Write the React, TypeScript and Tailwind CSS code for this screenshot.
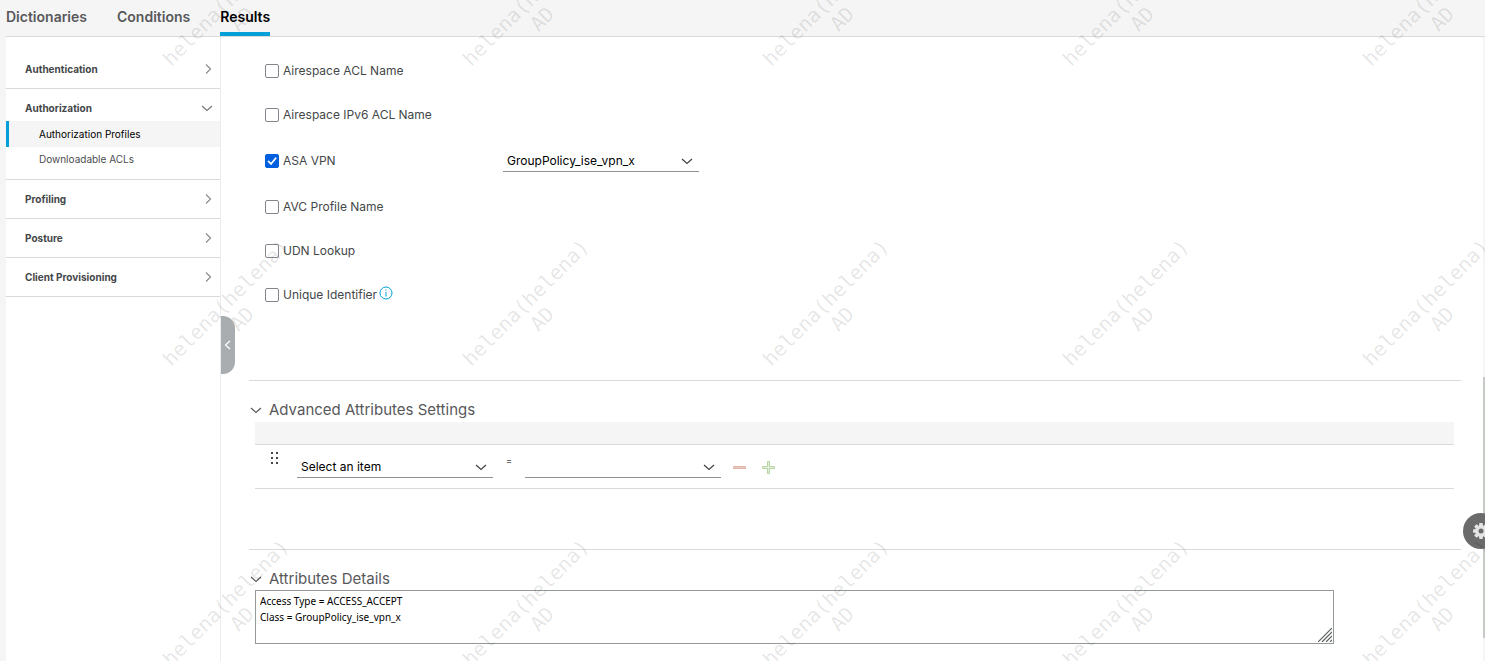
import { useState } from "react";
import type { ReactNode } from "react";

const BORDER = "border-[#d9dbd9]";

function Chevron({ dir, className = "" }: { dir: "down" | "right" | "left"; className?: string }) {
  const paths = { down: "M1 4 L6 8.5 L11 4", right: "M4 1.5 L8.5 6 L4 10.5", left: "M8 2 L3.5 6 L8 10" };
  return (
    <svg viewBox="0 0 12 12" className={`size-3 shrink-0 ${className}`} fill="none" stroke="currentColor" strokeWidth="1.2" aria-hidden="true">
      <path d={paths[dir]} />
    </svg>
  );
}

function NavItem({ children }: { children: ReactNode }) {
  return (
    <button className={`flex h-[39px] w-full items-center justify-between border-b pr-1.5 pl-[19px] text-left ${BORDER}`}>
      <span className="pt-px text-[10px] font-bold text-[#444749]">{children}</span>
      <Chevron dir="right" className="text-[#8a8d8f]" />
    </button>
  );
}

function Sidebar() {
  return (
    <nav className="w-[215px] shrink-0 border-r border-[#ececec] bg-white pt-[13px]">
      <NavItem>Authentication</NavItem>
      <div className={`border-b pb-[7px] ${BORDER}`}>
        <button className="flex h-8 w-full items-center justify-between pt-1.5 pr-[7px] pl-[19px]">
          <span className="pt-px text-[10px] font-bold text-[#444749]">Authorization</span>
          <Chevron dir="down" className="text-[#777a7c]" />
        </button>
        <a href="#profiles" className="flex h-[26px] items-center border-l-3 border-[#049fd9] bg-[#f5f5f5] pl-[30px] text-[10px] text-black">
          Authorization Profiles
        </a>
        <a href="#acls" className="flex h-[25px] items-center pl-[33px] text-[10px] text-[#4b4d4f]">
          Downloadable ACLs
        </a>
      </div>
      <NavItem>Profiling</NavItem>
      <NavItem>Posture</NavItem>
      <NavItem>Client Provisioning</NavItem>
    </nav>
  );
}

function Check({ label, checked = false }: { label: string; checked?: boolean }) {
  const [on, setOn] = useState(checked);
  return (
    <label className="flex items-center gap-1 text-[12px] text-[#444749]">
      <span className="grid size-[14px] place-items-center">
        <input
          type="checkbox"
          checked={on}
          onChange={() => setOn(!on)}
          className="col-start-1 row-start-1 size-[14px] appearance-none rounded-xs border border-[#85858e] bg-white checked:border-[#0060df] checked:bg-[#0060df]"
        />
        {on && (
          <svg viewBox="0 0 14 14" className="pointer-events-none col-start-1 row-start-1 size-[14px]" fill="none" stroke="white" strokeWidth="1.8" strokeLinecap="round" strokeLinejoin="round">
            <path d="M3.5 7.4 L6 10 L10.7 4.3" />
          </svg>
        )}
      </span>
      {label}
    </label>
  );
}

function Dropdown({ label, value }: { label: string; value: string }) {
  return (
    <div className="grid w-[196px] items-center border-b border-[#8f9490]">
      <select aria-label={label} className="col-start-1 row-start-1 h-5 w-full appearance-none bg-transparent px-1 text-[12px] text-black">
        <option>{value}</option>
      </select>
      <Chevron dir="down" className="pointer-events-none col-start-1 row-start-1 mr-1.5 justify-self-end text-[#3f4143]" />
    </div>
  );
}

function SectionTitle({ children }: { children: ReactNode }) {
  return (
    <h2>
      <button type="button" className="flex h-6 items-center gap-[7px] pl-px text-[15px] text-[#58585b]">
        <Chevron dir="down" />
        {children}
      </button>
    </h2>
  );
}

function Watermark() {
  return (
    <div aria-hidden="true" className="pointer-events-none absolute inset-0 overflow-hidden">
      <div className="-mt-[139px] ml-[84px] grid grid-cols-[repeat(5,300px)]">
        {Array.from({ length: 15 }, (_, i) => (
          <div key={i} className="grid h-[300px] place-items-center">
            <div className="-rotate-45 text-center font-['DejaVu_Sans_Mono',monospace] text-[20px] leading-[23px] text-black/11">
              helena(helena)
              <br />
              AD
            </div>
          </div>
        ))}
      </div>
    </div>
  );
}

export default function App() {
  return (
    <div className="relative flex h-screen flex-col overflow-hidden bg-[#f5f5f5] font-['Inter',sans-serif]">
      <header className="ml-1.5 flex h-[37px] shrink-0 gap-[30px] border-b border-[#d9dbd9] text-[14px] font-semibold text-[#58585b]">
        <a href="#dictionaries" className="flex h-9 items-center pb-1">Dictionaries</a>
        <a href="#conditions" className="flex h-9 items-center pb-1">Conditions</a>
        <a href="#results" className="flex h-9 items-center border-b-4 border-[#049fd9] text-black">Results</a>
      </header>

      <div className="flex min-h-0 flex-1 pl-1.5">
        <Sidebar />
        <button aria-label="Collapse menu" className="z-10 mt-[279px] flex h-[58px] w-[14px] shrink-0 items-center justify-center self-start rounded-r-xl bg-[#aaadb0] text-white">
          <Chevron dir="left" />
        </button>
        <main className="-ml-[14px] min-w-0 flex-1 bg-white pt-3 pr-[22px] pl-7">
          <form>
            <div className="pl-4">
              <div className="flex h-11 items-center"><Check label="Airespace ACL Name" /></div>
              <div className="flex h-11 items-center"><Check label="Airespace IPv6 ACL Name" /></div>
              <div className="flex h-12 items-center">
                <div className="w-[238px]"><Check label="ASA VPN" checked /></div>
                <Dropdown label="ASA VPN group policy" value="GroupPolicy_ise_vpn_x" />
              </div>
              <div className="flex h-11 items-center"><Check label="AVC Profile Name" /></div>
              <div className="flex h-11 items-center"><Check label="UDN Lookup" /></div>
              <div className="flex h-11 items-center gap-0.5">
                <Check label="Unique Identifier" />
                <svg viewBox="0 0 14 14" className="mb-1 size-[14px]" fill="none" stroke="#049fd9">
                  <circle cx="7" cy="7" r="6" />
                  <path d="M7 6 V10.5 M7 3.5 V4.7" />
                </svg>
              </div>
            </div>

            <section className={`mt-[63px] border-t pt-[17px] ${BORDER}`}>
              <SectionTitle>Advanced Attributes Settings</SectionTitle>
              <div className="mr-[7px] ml-1.5">
                <div className={`h-[23px] border-b bg-[#f5f5f5] ${BORDER}`} />
                <div className={`flex h-11 border-b pl-4 ${BORDER}`}>
                  <svg viewBox="0 0 8 14" className="mt-[7px] h-[14px] w-2" fill="#444749">
                    <path d="M0 0h2v2H0zM5 0h2v2H5zM0 5h2v2H0zM5 5h2v2H5zM0 10h2v2H0zM5 10h2v2H5z" />
                  </svg>
                  <div className="mt-3 ml-[18px]"><Dropdown label="Attribute" value="Select an item" /></div>
                  <span className="mt-2 w-8 text-center text-[9px] leading-4 text-[#444749]">=</span>
                  <div className="mt-3"><Dropdown label="Attribute value" value="" /></div>
                  <button type="button" aria-label="Remove" className="mt-4 ml-3 h-[14px]">
                    <svg viewBox="0 0 14 14" className="size-[14px]"><path d="M.5 5.5h12v2H.5z" fill="#ecc9bd" stroke="#dfb5a7" /></svg>
                  </button>
                  <button type="button" aria-label="Add" className="mt-4 ml-[15px] h-[14px]">
                    <svg viewBox="0 0 14 14" className="size-[14px]"><path d="M5.5 .5h2v5h5v2h-5v5h-2v-5h-5v-2h5z" fill="#e2f0d8" stroke="#b5d3a4" /></svg>
                  </button>
                </div>
              </div>
            </section>

            <section className={`mt-[60px] border-t pt-[17px] ${BORDER}`}>
              <SectionTitle>Attributes Details</SectionTitle>
              <div className="-mt-px ml-1.5 grid w-[89%]">
                <textarea
                  aria-label="Attributes Details"
                  readOnly
                  className="col-start-1 row-start-1 h-[54px] w-full resize-none border border-[#939995] px-1 py-0.5 font-['Noto_Sans',sans-serif] text-[10px] leading-4 text-black"
                  defaultValue={"Access Type = ACCESS_ACCEPT\nClass = GroupPolicy_ise_vpn_x"}
                />
                <svg viewBox="0 0 14 14" className="pointer-events-none col-start-1 row-start-1 mr-0.5 mb-0.5 size-[14px] self-end justify-self-end" stroke="#5c605d" strokeWidth="1.2">
                  <path d="M0 14L14 0M4 14L14 4M8 14L14 8M12 14L14 12" />
                </svg>
              </div>
            </section>
          </form>
        </main>
        <div className="w-0.5 shrink-0 bg-[#f5f5f5] pt-[340px]">
          <div className="h-[261px] bg-[#c5cac5]" />
        </div>
      </div>

      <button aria-label="Settings" className="absolute top-[513px] -right-[14px] grid size-9 place-items-center rounded-full bg-[#6b6b6b]">
        <svg viewBox="0 0 16 16" className="size-4">
          <g fill="#e4e4e4">
            <circle cx="8" cy="8" r="5.6" />
            <path d="M6.4 0h3.2l.5 3H5.9zM6.4 16h3.2l.5-3H5.9zM0 6.4v3.2l3 .5V5.9zM16 6.4v3.2l-3 .5V5.9z" />
            <path d="M6.4 0h3.2l.5 3H5.9zM6.4 16h3.2l.5-3H5.9zM0 6.4v3.2l3 .5V5.9zM16 6.4v3.2l-3 .5V5.9z" transform="rotate(45 8 8)" />
          </g>
          <circle cx="8" cy="8" r="2.5" fill="#6b6b6b" />
        </svg>
      </button>
      <Watermark />
    </div>
  );
}
